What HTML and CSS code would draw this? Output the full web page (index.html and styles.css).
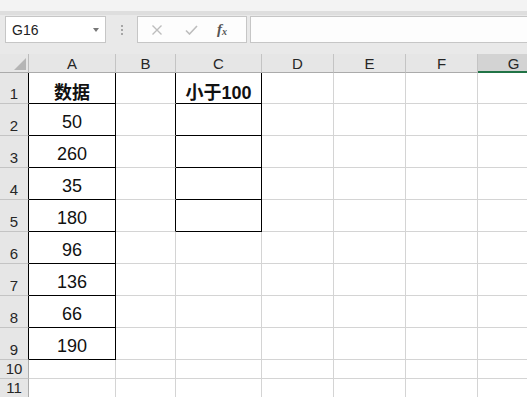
FILE: index.html
```html
<!DOCTYPE html>
<html lang="zh-CN">
<head>
    <meta charset="UTF-8">
    <title>Sheet</title>
    <link rel="stylesheet" href="styles.css">
</head>
<body>
    <div class="top-strip"></div>
    <div class="formula-bar">
        <div class="name-box">
            <span>G16</span>
            <span class="dropdown"></span>
        </div>
        <div class="grip"><i></i><i></i><i></i></div>
        <div class="fx-box">
            <svg class="icon" width="12" height="10" viewBox="0 0 12 10"><path d="M1.5 0.5 L10.5 9.5 M10.5 0.5 L1.5 9.5" stroke="#bdbdbd" stroke-width="1.4" fill="none"/></svg>
            <svg class="icon" width="13" height="10" viewBox="0 0 13 10"><path d="M1 5.5 L4.5 9 L12 1" stroke="#bdbdbd" stroke-width="1.6" fill="none"/></svg>
            <span class="fx">f<sub>x</sub></span>
        </div>
        <div class="formula-input"></div>
    </div>

    <div class="sheet">
        <!-- header row -->
        <div class="corner"><span class="tri"></span></div>
        <div class="col-head">A</div>
        <div class="col-head">B</div>
        <div class="col-head">C</div>
        <div class="col-head">D</div>
        <div class="col-head">E</div>
        <div class="col-head">F</div>
        <div class="col-head selected">G</div>

        <!-- row 1 -->
        <div class="row-head edge">1</div>
        <div class="cell box bold">数据</div>
        <div class="cell edge"></div>
        <div class="cell box bold">小于100</div>
        <div class="cell"></div><div class="cell"></div><div class="cell"></div><div class="cell"></div>

        <!-- row 2 -->
        <div class="row-head edge">2</div>
        <div class="cell box">50</div>
        <div class="cell edge"></div>
        <div class="cell box"></div>
        <div class="cell"></div><div class="cell"></div><div class="cell"></div><div class="cell"></div>

        <!-- row 3 -->
        <div class="row-head edge">3</div>
        <div class="cell box">260</div>
        <div class="cell edge"></div>
        <div class="cell box"></div>
        <div class="cell"></div><div class="cell"></div><div class="cell"></div><div class="cell"></div>

        <!-- row 4 -->
        <div class="row-head edge">4</div>
        <div class="cell box">35</div>
        <div class="cell edge"></div>
        <div class="cell box"></div>
        <div class="cell"></div><div class="cell"></div><div class="cell"></div><div class="cell"></div>

        <!-- row 5 -->
        <div class="row-head edge">5</div>
        <div class="cell box">180</div>
        <div class="cell edge"></div>
        <div class="cell box"></div>
        <div class="cell"></div><div class="cell"></div><div class="cell"></div><div class="cell"></div>

        <!-- row 6 -->
        <div class="row-head edge">6</div>
        <div class="cell box">96</div>
        <div class="cell"></div><div class="cell"></div>
        <div class="cell"></div><div class="cell"></div><div class="cell"></div><div class="cell"></div>

        <!-- row 7 -->
        <div class="row-head edge">7</div>
        <div class="cell box">136</div>
        <div class="cell"></div><div class="cell"></div>
        <div class="cell"></div><div class="cell"></div><div class="cell"></div><div class="cell"></div>

        <!-- row 8 -->
        <div class="row-head edge">8</div>
        <div class="cell box">66</div>
        <div class="cell"></div><div class="cell"></div>
        <div class="cell"></div><div class="cell"></div><div class="cell"></div><div class="cell"></div>

        <!-- row 9 -->
        <div class="row-head edge">9</div>
        <div class="cell box">190</div>
        <div class="cell"></div><div class="cell"></div>
        <div class="cell"></div><div class="cell"></div><div class="cell"></div><div class="cell"></div>

        <!-- row 10 -->
        <div class="row-head">10</div>
        <div class="cell"></div><div class="cell"></div><div class="cell"></div>
        <div class="cell"></div><div class="cell"></div><div class="cell"></div><div class="cell"></div>

        <!-- row 11 -->
        <div class="row-head">11</div>
        <div class="cell"></div><div class="cell"></div><div class="cell"></div>
        <div class="cell"></div><div class="cell"></div><div class="cell"></div><div class="cell"></div>
    </div>
</body>
</html>
```

FILE: styles.css
```css
/* General */
body {
    margin: 0;
    width: 527px;
    height: 397px;
    overflow: hidden;
    background: #fff;
    font-family: "Liberation Sans", "Noto Sans CJK SC", sans-serif;
    color: #000;
}

.top-strip {
    height: 11px;
    background: #f3f3f3;
    border-bottom: 4px solid #dedede;
}

/* Formula bar */
.formula-bar {
    height: 39px;
    background: #e9e9e9;
    display: flex;
    align-items: flex-start;
    padding-top: 1px;
    box-sizing: border-box;
}

.name-box {
    margin-left: 5px;
    width: 101px;
    height: 27px;
    box-sizing: border-box;
    background: #fff;
    border: 1px solid #c6c6c6;
    display: flex;
    align-items: center;
    justify-content: space-between;
    padding: 0 6px 0 6px;
    font-size: 14px;
    color: #222;
}

.dropdown {
    width: 0;
    height: 0;
    border-left: 3px solid transparent;
    border-right: 3px solid transparent;
    border-top: 4px solid #777;
}

.grip {
    width: 31px;
    height: 27px;
    display: flex;
    flex-direction: column;
    align-items: center;
    justify-content: center;
    gap: 2px;
}

.grip i {
    display: block;
    width: 2px;
    height: 2px;
    background: #a6a6a6;
}

.fx-box {
    width: 110px;
    height: 27px;
    box-sizing: border-box;
    background: #fdfdfd;
    border: 1px solid #c6c6c6;
    display: flex;
    align-items: center;
    padding-left: 13px;
    gap: 22px;
}

.fx {
    font-family: "Liberation Serif", serif;
    font-style: italic;
    font-weight: bold;
    font-size: 15px;
    color: #555;
    margin-left: -3px;
}

.fx sub {
    font-size: 10px;
    vertical-align: -1px;
}

.formula-input {
    flex: 1;
    margin-left: 3px;
    height: 27px;
    box-sizing: border-box;
    background: #fdfdfd;
    border: 1px solid #c6c6c6;
    border-right: none;
}

/* Sheet grid */
.sheet {
    display: grid;
    grid-template-columns: 29px 87px 60px 86px 72px 72px 72px 72px;
    grid-template-rows: 19px 31px repeat(8, 32px) 19px 19px;
}

.sheet > div {
    box-sizing: border-box;
}

.corner {
    background: #e6e6e6;
    border-right: 1px solid #bcbcbc;
    border-bottom: 1px solid #ababab;
    position: relative;
}

.tri {
    position: absolute;
    right: 2px;
    bottom: 2px;
    width: 0;
    height: 0;
    border-left: 12px solid transparent;
    border-bottom: 12px solid #b5b5b5;
}

.col-head {
    background: #e6e6e6;
    border-right: 1px solid #c4c4c4;
    border-bottom: 1px solid #ababab;
    font-size: 15px;
    color: #262626;
    text-align: center;
    line-height: 20px;
}

.col-head.selected {
    background: #d3d3d3;
    border-bottom: 2px solid #217346;
}

.row-head {
    background: #e6e6e6;
    border-right: 1px solid #ababab;
    border-bottom: 1px solid #c4c4c4;
    font-size: 15px;
    color: #262626;
    display: flex;
    align-items: flex-end;
    justify-content: center;
    padding-bottom: 1px;
}

.row-head.edge {
    border-right-color: #000;
}

.cell {
    border-right: 1px solid #d4d4d4;
    border-bottom: 1px solid #d4d4d4;
    display: flex;
    align-items: center;
    justify-content: center;
    padding-top: 5px;
    font-size: 18px;
    color: #111;
    white-space: nowrap;
}

.cell.box {
    border-right-color: #000;
    border-bottom-color: #000;
}

.cell.edge {
    border-right-color: #000;
}

.bold {
    font-weight: bold;
}
```
